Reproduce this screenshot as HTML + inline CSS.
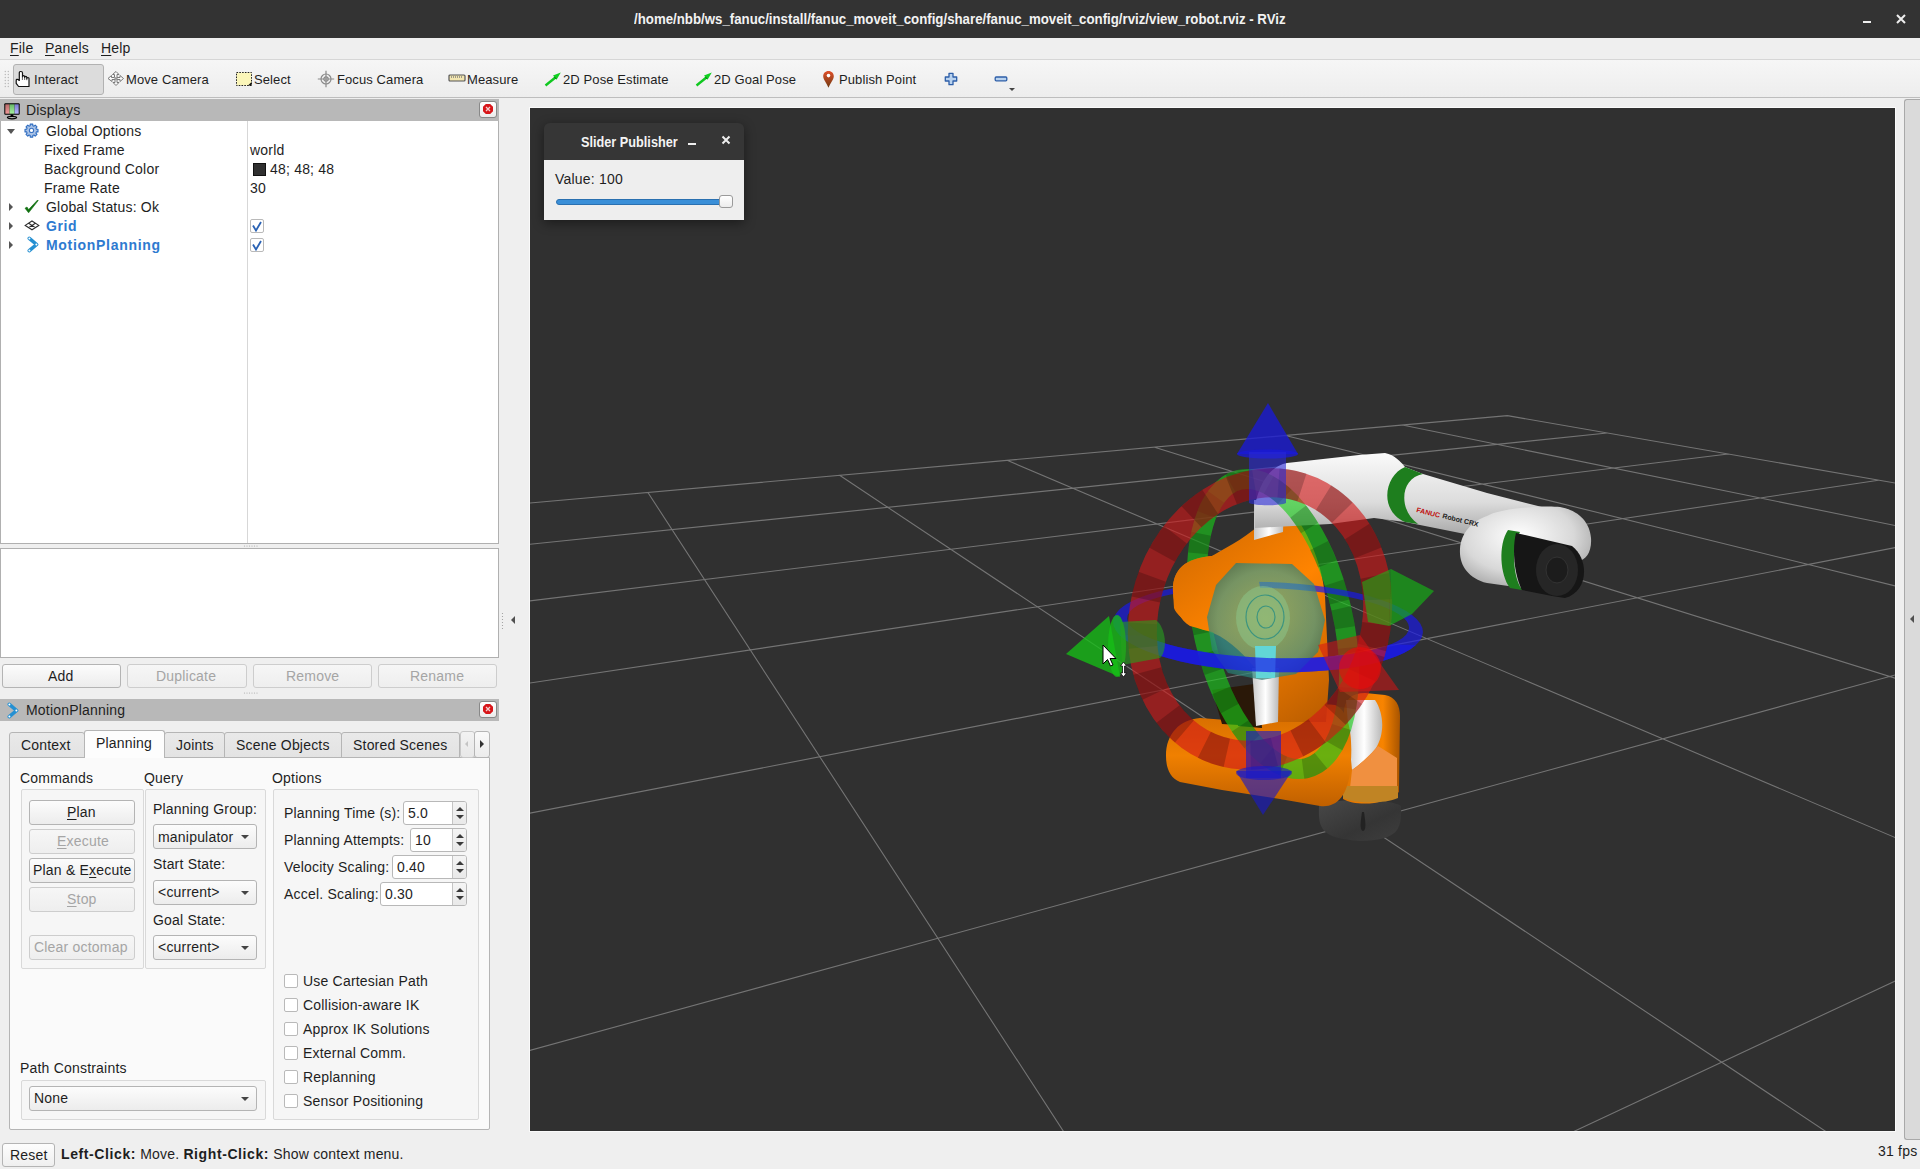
<!DOCTYPE html>
<html><head><meta charset="utf-8">
<style>
*{box-sizing:border-box;margin:0;padding:0}
html,body{width:1920px;height:1169px;overflow:hidden;background:#efefef;font-family:"Liberation Sans",sans-serif;color:#1b1b1b}
.a{position:absolute}
.t{position:absolute;white-space:nowrap;font-size:14px;line-height:19px;height:19px;letter-spacing:.2px;color:#1e1e1e}
.b{font-weight:bold}
.btn{position:absolute;border:1px solid #b4b4b4;border-radius:3px;background:linear-gradient(#fcfcfc,#ececec);}
.btn.dis{border-color:#cdcdcd;background:linear-gradient(#f6f6f6,#eeeeee)}
.dis{color:#a5a5a5}
.grp{position:absolute;border:1px solid #d9d9d9;border-radius:2px;background:#f6f6f6}
.spin{position:absolute;border:1px solid #b8b8b8;border-radius:3px;background:#fff;overflow:hidden}
.spin .ar{position:absolute;right:0;top:0;bottom:0;width:14px;border-left:1px solid #c4c4c4;background:linear-gradient(#f4f4f4,#e9e9e9)}
.up{position:absolute;left:3px;width:0;height:0;border-left:4px solid transparent;border-right:4px solid transparent;border-bottom:4px solid #3a3a3a}
.dn{position:absolute;left:3px;width:0;height:0;border-left:4px solid transparent;border-right:4px solid transparent;border-top:4px solid #3a3a3a}
.cdn{position:absolute;width:0;height:0;border-left:4px solid transparent;border-right:4px solid transparent;border-top:4px solid #444}
.chk{position:absolute;width:14px;height:14px;border:1px solid #b9b9b9;border-radius:2px;background:#fff}
.u{text-decoration:underline;text-underline-offset:2px}
</style></head><body>
<!-- title bar -->
<div class="a" style="left:0;top:0;width:1920px;height:38px;background:#333333"></div>
<div class="t b" style="left:634px;top:9px;font-size:15px;color:#f2f2f2;letter-spacing:0;transform-origin:0 0;transform:scaleX(0.884)" id="title">/home/nbb/ws_fanuc/install/fanuc_moveit_config/share/fanuc_moveit_config/rviz/view_robot.rviz - RViz</div>
<div class="a" style="left:1863px;top:21px;width:8px;height:2px;background:#eee"></div>
<svg class="a" style="left:1896px;top:14px" width="10" height="10"><path d="M1 1L9 9M9 1L1 9" stroke="#eee" stroke-width="2"/></svg>
<!-- menu bar -->
<div class="a" style="left:0;top:38px;width:1920px;height:21px;background:#efefef"></div>
<div class="a" style="left:0;top:59px;width:1920px;height:1px;background:#d6d6d6"></div>
<div class="t" style="left:10px;top:39px"><span class="u">F</span>ile</div>
<div class="t" style="left:45px;top:39px"><span class="u">P</span>anels</div>
<div class="t" style="left:101px;top:39px"><span class="u">H</span>elp</div>
<!-- toolbar -->
<div class="a" style="left:0;top:60px;width:1920px;height:37px;background:linear-gradient(#f6f6f6,#ededed)"></div>
<div class="a" style="left:0;top:97px;width:1920px;height:1px;background:#bdbdbd"></div>
<svg class="a" style="left:4px;top:70px" width="6" height="18"><g fill="#b9b9b9"><circle cx="1.3" cy="1.5" r=".7"/><circle cx="4.3" cy="1.5" r=".7"/><circle cx="1.3" cy="4.5" r=".7"/><circle cx="4.3" cy="4.5" r=".7"/><circle cx="1.3" cy="7.5" r=".7"/><circle cx="4.3" cy="7.5" r=".7"/><circle cx="1.3" cy="10.5" r=".7"/><circle cx="4.3" cy="10.5" r=".7"/><circle cx="1.3" cy="13.5" r=".7"/><circle cx="4.3" cy="13.5" r=".7"/><circle cx="1.3" cy="16.5" r=".7"/><circle cx="4.3" cy="16.5" r=".7"/></g></svg>
<div class="a" style="left:13px;top:64px;width:91px;height:31px;border:1px solid #b2b2b2;border-radius:3px;background:#dcdcdc"></div>
<svg class="a" style="left:15px;top:70px" width="18" height="18" viewBox="0 0 18 18"><path d="M5.5 1.5C4.6 1.5 4.3 2 4.3 3v7.5L3 9.5C2.3 9 1.2 9.4 1.2 10.4v3L3.6 16.5h10.4V8.8c0-.9-.4-1.3-1.1-1.3s-1.1.4-1.1 1.2V7.6c0-.8-.4-1.2-1.1-1.2s-1.1.4-1.1 1.2V6.8c0-.8-.4-1.2-1.1-1.2S7.5 6 7.5 6.8V3C7.5 2 7 1.5 6 1.5z" fill="#fff" stroke="#111" stroke-width="1.2" stroke-linejoin="round"/><path d="M7.4 6.5V10M9.7 7v3M11.8 8v2.2" stroke="#333" stroke-width=".8"/></svg>
<div class="t" style="font-size:13px;letter-spacing:.1px;left:34px;top:70px">Interact</div>
<svg class="a" style="left:107px;top:70px" width="18" height="18" viewBox="0 0 18 18"><g fill="#fafafa" stroke="#7a7a7a" stroke-width="1"><path d="M9 1.5l3 3h-2v3h3v-2l3.5 3-3.5 3v-2h-3v3h2l-3 3-3-3h2v-3h-3v2L1 8.5l3.5-3v2h3v-3h-2z"/></g><circle cx="9" cy="8.5" r="1.6" fill="#999"/></svg>
<div class="t" style="font-size:13px;letter-spacing:.1px;left:126px;top:70px">Move Camera</div>
<svg class="a" style="left:235px;top:70px" width="18" height="18" viewBox="0 0 18 18"><rect x="1.5" y="2.5" width="15" height="13" fill="#fbf6b9" stroke="#222" stroke-width="1" stroke-dasharray="1.6 1.2"/><path d="M13 15.5h3.5V12z" fill="#111"/></svg>
<div class="t" style="font-size:13px;letter-spacing:.1px;left:254px;top:70px">Select</div>
<svg class="a" style="left:317px;top:70px" width="18" height="18" viewBox="0 0 18 18"><g fill="none" stroke="#8a8a8a" stroke-width="1.2"><circle cx="9" cy="9" r="5"/><circle cx="9" cy="9" r="2.2"/><path d="M9 .8v16.4M.8 9h16.4"/></g></svg>
<div class="t" style="font-size:13px;letter-spacing:.1px;left:337px;top:70px">Focus Camera</div>
<svg class="a" style="left:448px;top:74px" width="18" height="9" viewBox="0 0 18 9"><rect x="1" y="1" width="16" height="6" rx="1" fill="#f3e6b0" stroke="#555" stroke-width="1.2"/><path d="M3.5 2v2M5.5 2v2M7.5 2v2M9.5 2v2M11.5 2v2M13.5 2v2" stroke="#777" stroke-width=".7"/></svg>
<div class="t" style="font-size:13px;letter-spacing:.1px;left:467px;top:70px">Measure</div>
<svg class="a" style="left:544px;top:71px" width="18" height="16" viewBox="0 0 18 16"><path d="M1.5 14.5L12 6" stroke="#10c820" stroke-width="2.4"/><path d="M16.8 1.5L9 4.5l3.5 4.3z" fill="#10d020"/><path d="M10.6 6.2l1.4 1.6" stroke="#0a5a10" stroke-width="1"/></svg>
<div class="t" style="font-size:13px;letter-spacing:.1px;left:563px;top:70px">2D Pose Estimate</div>
<svg class="a" style="left:695px;top:71px" width="18" height="16" viewBox="0 0 18 16"><path d="M1.5 14.5L12 6" stroke="#10c820" stroke-width="2.4"/><path d="M16.8 1.5L9 4.5l3.5 4.3z" fill="#10d020"/><path d="M10.6 6.2l1.4 1.6" stroke="#0a5a10" stroke-width="1"/></svg>
<div class="t" style="font-size:13px;letter-spacing:.1px;left:714px;top:70px">2D Goal Pose</div>
<svg class="a" style="left:822px;top:70px" width="13" height="19" viewBox="0 0 13 19"><defs><linearGradient id="pin" x1="0" y1="0" x2="0" y2="1"><stop offset="0" stop-color="#e0502a"/><stop offset="1" stop-color="#6e3a12"/></linearGradient></defs><path d="M6.5 1C3.3 1 1.2 3.3 1.2 6.2c0 3.2 3.2 6.3 5.3 11.6C8.6 12.5 11.8 9.4 11.8 6.2 11.8 3.3 9.7 1 6.5 1z" fill="url(#pin)"/><circle cx="6.5" cy="5.6" r="1.8" fill="#fff"/></svg>
<div class="t" style="font-size:13px;letter-spacing:.1px;left:839px;top:70px">Publish Point</div>
<svg class="a" style="left:944px;top:72px" width="14" height="14" viewBox="0 0 14 14"><path d="M5 1.3h4v3.7h3.7v4H9v3.7H5V9H1.3V5H5z" fill="#b9d2ee" stroke="#2d5ea8" stroke-width="1.3" stroke-linejoin="round"/></svg>
<svg class="a" style="left:994px;top:76px" width="14" height="6" viewBox="0 0 14 6"><rect x="1.2" y="1" width="11.6" height="3.8" rx="1" fill="#b9d2ee" stroke="#2d5ea8" stroke-width="1.3"/></svg>
<div class="a" style="left:1009px;top:88px;width:0;height:0;border-left:3px solid transparent;border-right:3px solid transparent;border-top:3px solid #444"></div>

<!-- left dock -->
<!-- Displays header -->
<div class="a" style="left:0;top:99px;width:499px;height:22px;background:#b8b8b8"></div>
<svg class="a" style="left:3px;top:102px" width="18" height="18" viewBox="0 0 18 18"><defs><linearGradient id="mr" x1="0" y1="0" x2="0" y2="1"><stop offset="0" stop-color="#b86a6a"/><stop offset="1" stop-color="#f09a9a"/></linearGradient><linearGradient id="mg" x1="0" y1="0" x2="0" y2="1"><stop offset="0" stop-color="#68b868"/><stop offset="1" stop-color="#a6f0a0"/></linearGradient><linearGradient id="mb" x1="0" y1="0" x2="0" y2="1"><stop offset="0" stop-color="#7a7ad0"/><stop offset="1" stop-color="#b6b6ff"/></linearGradient></defs><rect x="1.3" y="1.3" width="15.4" height="11.4" rx="1" fill="#000"/><rect x="2.3" y="2.3" width="4.3" height="9.4" fill="url(#mr)"/><rect x="6.6" y="2.3" width="5" height="9.4" fill="url(#mg)"/><rect x="11.6" y="2.3" width="4.1" height="9.4" fill="url(#mb)"/><path d="M8 12.5h2l.6 1.6H7.4z" fill="#000"/><ellipse cx="9" cy="15.6" rx="4.6" ry="1.2" fill="none" stroke="#000" stroke-width="1.2"/></svg>
<div class="t" style="left:26px;top:101px">Displays</div>
<div class="a" style="left:479px;top:101px;width:18px;height:17px;border:1px solid #888;border-radius:3px;background:linear-gradient(#fff,#ececec)"></div>
<svg class="a" style="left:482px;top:103px" width="12" height="12" viewBox="0 0 12 12"><path d="M3.8 1h4.4L11 3.8v4.4L8.2 11H3.8L1 8.2V3.8z" fill="#d8161a"/><path d="M4 4l4 4M8 4L4 8" stroke="#f4d0d0" stroke-width="1.3"/></svg>
<!-- tree -->
<div class="a" style="left:0;top:121px;width:499px;height:423px;background:#fff;border:1px solid #b0b0b0;border-top:none"></div>
<div class="a" style="left:247px;top:121px;width:1px;height:422px;background:#d7d7d7"></div>
<div class="a" style="left:7px;top:129px;width:0;height:0;border-left:4px solid transparent;border-right:4px solid transparent;border-top:5px solid #555"></div>
<svg class="a" style="left:24px;top:123px" width="15" height="15" viewBox="0 0 15 15"><g transform="translate(7.5 7.4)"><path d="M-1.3-6.3h2.6v1.6l1.2.5 1.2-1.1 1.8 1.8-1.1 1.2.5 1.2h1.6v2.6h-1.6l-.5 1.2 1.1 1.2-1.8 1.8-1.2-1.1-1.2.5v1.6h-2.6v-1.6l-1.2-.5-1.2 1.1-1.8-1.8 1.1-1.2-.5-1.2h-1.6v-2.6h1.6l.5-1.2-1.1-1.2 1.8-1.8 1.2 1.1 1.2-.5z" fill="#a9c2e6" stroke="#2e6cc0" stroke-width="1.1" stroke-linejoin="round"/><circle r="2.1" fill="#fff" stroke="#3a74c4" stroke-width="1.1"/></g></svg>
<div class="t" style="left:46px;top:122px">Global Options</div>
<div class="t" style="left:44px;top:141px">Fixed Frame</div>
<div class="t" style="left:44px;top:160px">Background Color</div>
<div class="t" style="left:44px;top:179px">Frame Rate</div>
<div class="t" style="left:250px;top:141px">world</div>
<div class="a" style="left:253px;top:163px;width:13px;height:13px;background:#303030;border:1px solid #111"></div>
<div class="t" style="left:270px;top:160px">48; 48; 48</div>
<div class="t" style="left:250px;top:179px">30</div>
<div class="a" style="left:9px;top:203px;width:0;height:0;border-top:4px solid transparent;border-bottom:4px solid transparent;border-left:4px solid #555"></div>
<div class="a" style="left:9px;top:222px;width:0;height:0;border-top:4px solid transparent;border-bottom:4px solid transparent;border-left:4px solid #555"></div>
<div class="a" style="left:9px;top:241px;width:0;height:0;border-top:4px solid transparent;border-bottom:4px solid transparent;border-left:4px solid #555"></div>
<svg class="a" style="left:24px;top:199px" width="15" height="15" viewBox="0 0 15 15"><path d="M1 9.2 L3 8 L4.6 10.6 L13.6 1 L14.2 1.6 L4.6 13.8Z" fill="#107010" stroke="#107010" stroke-width=".6" stroke-linejoin="round"/></svg>
<div class="t" style="left:46px;top:198px">Global Status: Ok</div>
<svg class="a" style="left:24px;top:220px" width="16" height="11" viewBox="0 0 16 11"><path d="M8 1L14.8 5.4 8 9.8 1.2 5.4z M4.6 3.2l6.8 4.4 M11.4 3.2l-6.8 4.4" fill="none" stroke="#2a2a2a" stroke-width="1.1"/></svg>
<div class="t b" style="left:46px;top:217px;color:#2e7ad0;letter-spacing:.6px">Grid</div>
<svg class="a" style="left:27px;top:236px" width="12" height="17" viewBox="0 0 12 17"><path d="M2.3 2.3L9.6 8.5 2.3 14.7" fill="none" stroke="#2590d2" stroke-width="3.6" stroke-linecap="round" stroke-linejoin="round"/><circle cx="2.4" cy="2.4" r="1" fill="#fff"/><circle cx="9.4" cy="8.5" r="1" fill="#fff"/><circle cx="2.4" cy="14.6" r="1" fill="#fff"/></svg>
<div class="t b" style="left:46px;top:236px;color:#2e7ad0;letter-spacing:.7px">MotionPlanning</div>
<div class="chk" style="left:250px;top:219px"></div>
<svg class="a" style="left:251px;top:221px" width="12" height="11" viewBox="0 0 12 11"><path d="M2 4.5L5 9.5 10 1" fill="none" stroke="#2a62b4" stroke-width="1.8"/></svg>
<div class="chk" style="left:250px;top:238px"></div>
<svg class="a" style="left:251px;top:240px" width="12" height="11" viewBox="0 0 12 11"><path d="M2 4.5L5 9.5 10 1" fill="none" stroke="#2a62b4" stroke-width="1.8"/></svg>
<!-- splitter dots -->
<svg class="a" style="left:243px;top:544px" width="16" height="4"><g fill="#aaa"><circle cx="1.5" cy="2" r=".6"/><circle cx="4" cy="2" r=".6"/><circle cx="6.5" cy="2" r=".6"/><circle cx="9" cy="2" r=".6"/><circle cx="11.5" cy="2" r=".6"/><circle cx="14" cy="2" r=".6"/></g></svg>
<!-- description box -->
<div class="a" style="left:0;top:548px;width:499px;height:110px;background:#fff;border:1px solid #b0b0b0"></div>
<!-- buttons -->
<div class="btn" style="left:2px;top:664px;width:119px;height:24px"></div><div class="t" style="left:48px;top:667px">Add</div>
<div class="btn dis" style="left:127px;top:664px;width:120px;height:24px"></div><div class="t dis" style="left:156px;top:667px">Duplicate</div>
<div class="btn dis" style="left:253px;top:664px;width:119px;height:24px"></div><div class="t dis" style="left:286px;top:667px">Remove</div>
<div class="btn dis" style="left:378px;top:664px;width:119px;height:24px"></div><div class="t dis" style="left:410px;top:667px">Rename</div>
<svg class="a" style="left:243px;top:691px" width="16" height="4"><g fill="#aaa"><circle cx="1.5" cy="2" r=".6"/><circle cx="4" cy="2" r=".6"/><circle cx="6.5" cy="2" r=".6"/><circle cx="9" cy="2" r=".6"/><circle cx="11.5" cy="2" r=".6"/><circle cx="14" cy="2" r=".6"/></g></svg>
<!-- left splitter handle -->
<svg class="a" style="left:501px;top:612px" width="3" height="18"><g fill="#999"><circle cx="1.5" cy="1.5" r=".6"/><circle cx="1.5" cy="4.5" r=".6"/><circle cx="1.5" cy="7.5" r=".6"/><circle cx="1.5" cy="10.5" r=".6"/><circle cx="1.5" cy="13.5" r=".6"/><circle cx="1.5" cy="16.5" r=".6"/></g></svg>
<div class="a" style="left:511px;top:616px;width:0;height:0;border-top:4px solid transparent;border-bottom:4px solid transparent;border-right:4px solid #505050"></div>
<!-- MotionPlanning header -->
<div class="a" style="left:0;top:699px;width:499px;height:22px;background:#b8b8b8"></div>
<svg class="a" style="left:7px;top:702px" width="12" height="17" viewBox="0 0 12 17"><path d="M2.3 2.3L9.6 8.5 2.3 14.7" fill="none" stroke="#2590d2" stroke-width="3.6" stroke-linecap="round" stroke-linejoin="round"/><circle cx="2.4" cy="2.4" r="1" fill="#fff"/><circle cx="9.4" cy="8.5" r="1" fill="#fff"/><circle cx="2.4" cy="14.6" r="1" fill="#fff"/></svg>
<div class="t" style="left:26px;top:701px">MotionPlanning</div>
<div class="a" style="left:479px;top:701px;width:18px;height:17px;border:1px solid #888;border-radius:3px;background:linear-gradient(#fff,#ececec)"></div>
<svg class="a" style="left:482px;top:703px" width="12" height="12" viewBox="0 0 12 12"><path d="M3.8 1h4.4L11 3.8v4.4L8.2 11H3.8L1 8.2V3.8z" fill="#d8161a"/><path d="M4 4l4 4M8 4L4 8" stroke="#f4d0d0" stroke-width="1.3"/></svg>
<!-- tabs -->
<div class="a" style="left:9px;top:757px;width:481px;height:373px;border:1px solid #b5b5b5;background:#fafafa;border-radius:0 0 2px 2px"></div>
<div class="a" style="left:9px;top:732px;width:76px;height:26px;border:1px solid #b5b5b5;border-radius:3px 3px 0 0;background:linear-gradient(#e9e9e9,#e3e3e3)"></div>
<div class="t" style="left:21px;top:736px">Context</div>
<div class="a" style="left:164px;top:732px;width:61px;height:26px;border:1px solid #b5b5b5;border-radius:3px 3px 0 0;background:linear-gradient(#e9e9e9,#e3e3e3)"></div>
<div class="t" style="left:176px;top:736px">Joints</div>
<div class="a" style="left:224px;top:732px;width:118px;height:26px;border:1px solid #b5b5b5;border-radius:3px 3px 0 0;background:linear-gradient(#e9e9e9,#e3e3e3)"></div>
<div class="t" style="left:236px;top:736px">Scene Objects</div>
<div class="a" style="left:341px;top:732px;width:119px;height:26px;border:1px solid #b5b5b5;border-radius:3px 3px 0 0;background:linear-gradient(#e9e9e9,#e3e3e3)"></div>
<div class="t" style="left:353px;top:736px">Stored Scenes</div>
<div class="a" style="left:84px;top:730px;width:81px;height:28px;border:1px solid #b5b5b5;border-bottom:none;border-radius:3px 3px 0 0;background:#fdfdfd"></div>
<div class="t" style="left:96px;top:734px">Planning</div>
<div class="a" style="left:460px;top:731px;width:15px;height:27px;border:1px solid #c8c8c8;border-radius:3px;background:linear-gradient(#f2f2f2,#e8e8e8)"></div>
<div class="a" style="left:465px;top:741px;width:0;height:0;border-top:3px solid transparent;border-bottom:3px solid transparent;border-right:3px solid #c4c4c4"></div>
<div class="a" style="left:474px;top:731px;width:16px;height:27px;border:1px solid #b5b5b5;border-radius:3px;background:linear-gradient(#fafafa,#ececec)"></div>
<div class="a" style="left:480px;top:740px;width:0;height:0;border-top:4px solid transparent;border-bottom:4px solid transparent;border-left:4px solid #333"></div>
<div class="t" style="left:20px;top:769px">Commands</div>
<div class="t" style="left:144px;top:769px">Query</div>
<div class="t" style="left:272px;top:769px">Options</div>
<div class="grp" style="left:21px;top:789px;width:123px;height:180px"></div>
<div class="grp" style="left:145px;top:789px;width:121px;height:180px"></div>
<div class="grp" style="left:273px;top:789px;width:206px;height:331px"></div>
<div class="btn" style="left:29px;top:800px;width:106px;height:25px"></div><div class="t" style="left:67px;top:803px"><span class="u">P</span>lan</div>
<div class="btn dis" style="left:29px;top:829px;width:106px;height:25px"></div><div class="t dis" style="left:57px;top:832px"><span class="u">E</span>xecute</div>
<div class="btn" style="left:29px;top:858px;width:106px;height:25px"></div><div class="t" style="left:33px;top:861px">Plan &amp; E<span class="u">x</span>ecute</div>
<div class="btn dis" style="left:29px;top:887px;width:106px;height:25px"></div><div class="t dis" style="left:67px;top:890px"><span class="u">S</span>top</div>
<div class="btn dis" style="left:29px;top:935px;width:106px;height:25px"></div><div class="t dis" style="left:34px;top:938px">Clear octomap</div>
<div class="t" style="left:153px;top:800px">Planning Group:</div>
<div class="btn" style="left:153px;top:824px;width:104px;height:25px"></div><div class="t" style="left:158px;top:828px;width:78px;overflow:hidden">manipulator</div><div class="cdn" style="left:241px;top:835px"></div>
<div class="t" style="left:153px;top:855px">Start State:</div>
<div class="btn" style="left:153px;top:880px;width:104px;height:25px"></div><div class="t" style="left:158px;top:883px">&lt;current&gt;</div><div class="cdn" style="left:241px;top:891px"></div>
<div class="t" style="left:153px;top:911px">Goal State:</div>
<div class="btn" style="left:153px;top:935px;width:104px;height:25px"></div><div class="t" style="left:158px;top:938px">&lt;current&gt;</div><div class="cdn" style="left:241px;top:946px"></div>
<div class="t" style="left:284px;top:804px">Planning Time (s):</div>
<div class="spin" style="left:403px;top:801px;width:64px;height:24px"><div class="ar"><div class="up" style="top:5px"></div><div class="dn" style="top:13px"></div></div></div><div class="t" style="left:408px;top:804px">5.0</div>
<div class="t" style="left:284px;top:831px">Planning Attempts:</div>
<div class="spin" style="left:410px;top:828px;width:57px;height:24px"><div class="ar"><div class="up" style="top:5px"></div><div class="dn" style="top:13px"></div></div></div><div class="t" style="left:415px;top:831px">10</div>
<div class="t" style="left:284px;top:858px">Velocity Scaling:</div>
<div class="spin" style="left:392px;top:855px;width:75px;height:24px"><div class="ar"><div class="up" style="top:5px"></div><div class="dn" style="top:13px"></div></div></div><div class="t" style="left:397px;top:858px">0.40</div>
<div class="t" style="left:284px;top:885px">Accel. Scaling:</div>
<div class="spin" style="left:380px;top:882px;width:87px;height:24px"><div class="ar"><div class="up" style="top:5px"></div><div class="dn" style="top:13px"></div></div></div><div class="t" style="left:385px;top:885px">0.30</div>
<div class="chk" style="left:284px;top:974px"></div><div class="t" style="left:303px;top:972px">Use Cartesian Path</div>
<div class="chk" style="left:284px;top:998px"></div><div class="t" style="left:303px;top:996px">Collision-aware IK</div>
<div class="chk" style="left:284px;top:1022px"></div><div class="t" style="left:303px;top:1020px">Approx IK Solutions</div>
<div class="chk" style="left:284px;top:1046px"></div><div class="t" style="left:303px;top:1044px">External Comm.</div>
<div class="chk" style="left:284px;top:1070px"></div><div class="t" style="left:303px;top:1068px">Replanning</div>
<div class="chk" style="left:284px;top:1094px"></div><div class="t" style="left:303px;top:1092px">Sensor Positioning</div>
<div class="t" style="left:20px;top:1059px">Path Constraints</div>
<div class="grp" style="left:21px;top:1080px;width:245px;height:40px"></div>
<div class="btn" style="left:29px;top:1086px;width:228px;height:25px"></div><div class="t" style="left:34px;top:1089px">None</div><div class="cdn" style="left:241px;top:1097px"></div>


<!-- viewport -->
<div class="a" style="left:529px;top:107px;width:1367px;height:1025px;background:#fafafa"></div>
<svg class="a" style="left:530px;top:108px" width="1365" height="1023" viewBox="530 108 1365 1023">
<rect x="530" y="108" width="1365" height="1023" fill="#303030"/>
<path d="M1507.4 415.6L1896.0 483.2M1402.3 425.0L1896.0 525.7M1285.4 435.5L1896.0 586.1M1154.6 447.2L1896.0 678.5M1007.1 460.3L1896.0 837.9M839.6 475.3L1826.6 1132.0M647.9 492.5L1063.9 1132.0M1507.4 415.6L529.0 503.1M1607.1 433.0L529.0 544.4M1728.2 454.0L529.0 601.0M1878.5 480.2L529.0 683.2M1896.0 547.4L529.0 813.3M1896.0 674.7L529.0 1050.7M1896.0 980.6L1572.7 1132.0" stroke="#747474" stroke-width="1.1" fill="none"/>
<defs>
<linearGradient id="or1" gradientUnits="userSpaceOnUse" x1="1173" y1="508" x2="1329" y2="722"><stop offset="0" stop-color="#c86400"/><stop offset=".5" stop-color="#ff8400"/><stop offset="1" stop-color="#b85c00"/></linearGradient>
<linearGradient id="or2" x1="0" y1="0" x2="0" y2="1"><stop offset="0" stop-color="#d06a00"/><stop offset=".5" stop-color="#f08000"/><stop offset="1" stop-color="#c06000"/></linearGradient>
<linearGradient id="or3" x1="0" y1="0" x2="1" y2="0"><stop offset="0" stop-color="#e07400"/><stop offset=".7" stop-color="#f88400"/><stop offset="1" stop-color="#a85400"/></linearGradient>
<linearGradient id="wh1" x1="0" y1="0" x2="0" y2="1"><stop offset="0" stop-color="#fafafa"/><stop offset=".6" stop-color="#dcdcdc"/><stop offset="1" stop-color="#a8a8a8"/></linearGradient>
<linearGradient id="wh2" x1="0" y1="0" x2="1" y2="0"><stop offset="0" stop-color="#c8c8c8"/><stop offset=".5" stop-color="#ffffff"/><stop offset="1" stop-color="#b8b8b8"/></linearGradient>
<linearGradient id="bk1" x1="0" y1="0" x2="1" y2="0"><stop offset="0" stop-color="#242424"/><stop offset=".8" stop-color="#3a3a3a"/><stop offset="1" stop-color="#4a4a4a"/></linearGradient>
<radialGradient id="wr1" cx=".45" cy=".35" r=".7"><stop offset="0" stop-color="#ffffff"/><stop offset=".6" stop-color="#d8d8d8"/><stop offset="1" stop-color="#9a9a9a"/></radialGradient>
<radialGradient id="orb" cx=".35" cy=".3" r=".8"><stop offset="0" stop-color="#ee8000"/><stop offset=".7" stop-color="#d06800"/><stop offset="1" stop-color="#a05000"/></radialGradient>
</defs>
<!-- base -->
<linearGradient id="bk2" x1="0" y1="0" x2="1" y2="1"><stop offset="0" stop-color="#484848"/><stop offset=".6" stop-color="#353535"/><stop offset="1" stop-color="#3e3e3e"/></linearGradient>
<path d="M1319 806 C1318 830 1322 838 1360 841 C1398 840 1402 830 1401 806 C1390 798 1330 798 1319 806Z" fill="url(#bk2)"/>
<path d="M1362 812 C1360 825 1360 830 1363 831 C1366 830 1366 825 1364 812Z" fill="#222"/>
<!-- J1 orange link -->
<path d="M1344 712 C1344 700 1352 693 1365 693 L1385 695 C1396 697 1400 706 1400 716 L1399 792 C1385 806 1355 806 1343 799Z" fill="url(#or3)"/>
<path d="M1346 700 L1375 700 C1385 715 1384 735 1376 748 C1369 757 1360 764 1352 770 C1350 750 1348 722 1346 700Z" fill="url(#wh2)"/>
<path d="M1352 770 C1362 763 1371 754 1378 746 L1397 758 L1397 788 L1350 788Z" fill="#f09040"/>
<path d="M1343 786 L1398 786 L1398 798 C1385 804 1355 804 1343 798Z" fill="#c08424"/>
<!-- lower link -->
<path d="M1166 756 C1166 733 1180 720 1200 718 L1240 721 C1262 716 1300 702 1335 705 C1352 712 1353 745 1350 772 C1347 797 1336 808 1320 806 L1280 799 L1222 790 L1180 782 C1170 778 1166 768 1166 756Z" fill="url(#or2)"/>
<path d="M1236 688 L1258 688 L1262 728 L1238 726Z" fill="#2a1a08"/>
<!-- housing -->
<path d="M1173 592 C1172 570 1185 558 1212 556 C1230 545 1250 536 1266 518 C1275 510 1288 508 1292 512 C1305 528 1322 560 1325 596 L1329 680 L1326 722 L1278 722 L1278 668 L1255 668 C1240 650 1225 636 1207 631 C1190 626 1176 615 1174 608Z" fill="url(#or1)"/>
<path d="M1212 690 L1254 684 L1256 726 L1222 724Z" fill="#2a1808"/>
<!-- white column -->
<path d="M1254 500 L1284 500 L1283 532 L1254 540Z" fill="url(#wh2)"/>
<path d="M1252 668 L1279 668 L1278 722 L1256 726Z" fill="url(#wh2)"/>
<!-- upper arm -->
<path d="M1255 528 L1255 505 C1262 474 1276 465 1287 463 L1359 455 L1385 453 C1395 455 1401 462 1405 467 L1423 474 L1487 493 L1542 507 L1470 535 L1405 522 L1374 518 L1330 524Z" fill="url(#wh1)"/>
<path d="M1405 467 C1385 475 1378 510 1405 522 L1418 524 C1398 510 1400 478 1423 474Z" fill="#1e7e1e"/>
<!-- wrist -->
<path d="M1487 516 C1500 508 1545 505 1560 507 C1578 510 1590 522 1591 538 C1592 552 1586 560 1578 561 L1550 592 L1487 583 C1468 578 1459 565 1460 549 C1461 533 1472 521 1487 516Z" fill="url(#wr1)"/>
<path d="M1508 530 C1498 545 1500 575 1510 588 L1522 590 C1512 575 1512 545 1520 532Z" fill="#1e7e1e"/>
<path d="M1516 533 L1572 546 C1590 560 1588 592 1565 598 L1552 596 L1522 590 C1514 575 1512 548 1516 533Z" fill="#161616"/>
<ellipse cx="1557" cy="570" rx="21" ry="26" fill="#262626"/>
<ellipse cx="1557" cy="570" rx="11" ry="13" fill="#1c1c1c" stroke="#333" stroke-width="1"/>
<text x="1416" y="512" font-family="Liberation Sans" font-size="7" font-weight="bold" fill="#c01010" transform="rotate(14 1416 512)">FANUC</text>
<text x="1442" y="518" font-family="Liberation Sans" font-size="7" font-weight="bold" fill="#222" transform="rotate(14 1442 518)">Robot CRX</text>
<!-- marker rings (back) -->
<g transform="rotate(-13 1273 624)"><ellipse cx="1273" cy="624" rx="70" ry="148" fill="none" stroke="rgba(25,205,25,.62)" stroke-width="20"/><ellipse cx="1273" cy="624" rx="70" ry="148" fill="none" stroke="rgba(0,0,0,.18)" stroke-width="20" stroke-dasharray="20 20"/></g>
<g transform="rotate(2 1268 627)"><path fill-rule="evenodd" fill="rgba(25,25,235,.68)" d="M1113 627A155 45 0 1 0 1423 627A155 45 0 1 0 1113 627ZM1127 623A141 35 0 1 0 1409 623A141 35 0 1 0 1127 623Z"/></g>
<path d="M1173 592 C1172 570 1185 558 1212 556 C1225 552 1240 545 1252 537 L1262 600 L1240 636 C1225 636 1207 631 1190 626 C1180 620 1174 608 1173 592Z" fill="url(#or1)"/>
<!-- cyan sphere -->
<radialGradient id="sph" cx=".5" cy=".48" r=".55"><stop offset="0" stop-color="rgba(90,190,150,.62)"/><stop offset=".75" stop-color="rgba(55,160,150,.66)"/><stop offset="1" stop-color="rgba(40,120,110,.72)"/></radialGradient>
<path d="M1236 563 L1292 564 L1314 584 L1325 620 L1318 652 L1296 674 L1262 680 L1228 673 L1212 650 L1207 617 L1216 585Z" fill="url(#sph)"/>
<ellipse cx="1263" cy="618" rx="27" ry="32" fill="rgba(140,200,140,.5)"/>
<ellipse cx="1265" cy="617" rx="19" ry="22" fill="none" stroke="rgba(40,140,130,.8)" stroke-width="1.2"/>
<ellipse cx="1266" cy="617" rx="9" ry="11" fill="none" stroke="rgba(40,140,130,.8)" stroke-width="1.2"/>
<path d="M1255 646 L1276 646 L1275 678 L1256 678Z" fill="#62d6d6"/>
<clipPath id="cpf"><rect x="1100" y="640" width="340" height="50"/></clipPath>
<g transform="rotate(2 1268 627)" clip-path="url(#cpf)"><path fill-rule="evenodd" fill="rgba(25,25,235,.68)" d="M1113 627A155 45 0 1 0 1423 627A155 45 0 1 0 1113 627ZM1127 623A141 35 0 1 0 1409 623A141 35 0 1 0 1127 623Z"/></g>
<g transform="rotate(17 1260 619)"><ellipse cx="1260" cy="619" rx="115.6" ry="138" fill="none" stroke="rgba(210,22,22,.62)" stroke-width="29"/><ellipse cx="1260" cy="619" rx="115.6" ry="138" fill="none" stroke="rgba(0,0,0,.2)" stroke-width="29" stroke-dasharray="24 24"/></g>
<!-- arrows -->
<g fill="rgba(25,25,215,.78)"><path d="M1268 403 L1237 454 L1298 454Z"/><ellipse cx="1267.5" cy="454" rx="30.5" ry="4.5"/><path d="M1249 452 L1286 452 L1286 503 C1280 506 1255 506 1249 503Z" fill="rgba(40,40,215,.6)"/></g>
<g fill="rgba(25,25,200,.62)"><path d="M1246 731 L1281 731 L1281 778 L1246 778Z"/><path d="M1236 771 L1292 771 L1263 815Z"/><ellipse cx="1264" cy="773" rx="28" ry="7"/></g>
<g fill="rgba(22,190,22,.78)"><path d="M1066 654 L1109 616 L1120 677Z"/><ellipse cx="1117" cy="646" rx="9" ry="31"/><path d="M1120 622 L1156 620 C1166 628 1168 650 1160 658 L1122 665Z" fill="rgba(40,160,30,.6)"/></g>
<g fill="rgba(22,175,22,.68)"><path d="M1391 569 L1434 591 L1412 614 L1389 626Z"/><path d="M1362 582 L1391 569 L1389 626 L1368 622Z" fill="rgba(22,190,22,.55)"/></g>
<g><path d="M1318 645 L1360 635 L1399 690 L1340 692Z" fill="rgba(215,20,20,.55)"/><circle cx="1360" cy="668" r="21" fill="rgba(235,10,10,.6)"/></g>
<!-- cursors -->
<path d="M1103 645 L1103 664 L1107.5 659.5 L1110.5 666 L1113 665 L1110 658.5 L1116 658.5Z" fill="#fff" stroke="#000" stroke-width="1"/>
<path d="M1123.5 662 L1126.5 666 L1124.5 666 L1124.5 673 L1126.5 673 L1123.5 677 L1120.5 673 L1122.5 673 L1122.5 666 L1120.5 666Z" fill="#fff" stroke="#000" stroke-width=".7"/>

</svg>
<div class="a" style="left:544px;top:123px;width:200px;height:97px;box-shadow:0 3px 12px rgba(0,0,0,.45);border-radius:6px 6px 0 0"></div>
<div class="a" style="left:544px;top:123px;width:200px;height:37px;background:#363636;border-radius:6px 6px 0 0"></div>
<div class="t b" style="left:581px;top:132px;color:#f4f4f4;font-size:15px;letter-spacing:0;transform-origin:0 0;transform:scaleX(.847)">Slider Publisher</div>
<div class="a" style="left:688px;top:143px;width:8px;height:2px;background:#eee"></div>
<svg class="a" style="left:721px;top:135px" width="10" height="10"><path d="M1.5 1.5L8.5 8.5M8.5 1.5L1.5 8.5" stroke="#eee" stroke-width="2"/></svg>
<div class="a" style="left:544px;top:160px;width:200px;height:60px;background:#eeeeee"></div>
<div class="t" style="left:555px;top:170px">Value: 100</div>
<div class="a" style="left:556px;top:199px;width:172px;height:6px;border-radius:3px;background:#3a8fd8;border:1px solid #2a70b0"></div>
<div class="a" style="left:719px;top:195px;width:14px;height:13px;border-radius:3px;border:1px solid #9a9a9a;background:linear-gradient(#fff,#ececec)"></div>

<!-- right dock handle -->
<div class="a" style="left:1904px;top:99px;width:16px;height:1041px;border:1px solid #a9a9a9;border-right:none;border-radius:3px 0 0 3px;background:#dadada"></div>
<div class="a" style="left:1910px;top:615px;width:0;height:0;border-top:4px solid transparent;border-bottom:4px solid transparent;border-right:4px solid #505050"></div>
<!-- status bar -->
<div class="btn" style="left:2px;top:1143px;width:53px;height:24px;background:linear-gradient(#fdfdfd,#efefef)"></div><div class="t" style="left:10px;top:1146px">Reset</div>
<div class="t" style="left:61px;top:1145px"><b style="letter-spacing:.6px">Left-Click:</b> Move. <b style="letter-spacing:.6px">Right-Click:</b> Show context menu.</div>
<div class="t" style="left:1878px;top:1142px">31 fps</div>

</body></html>
